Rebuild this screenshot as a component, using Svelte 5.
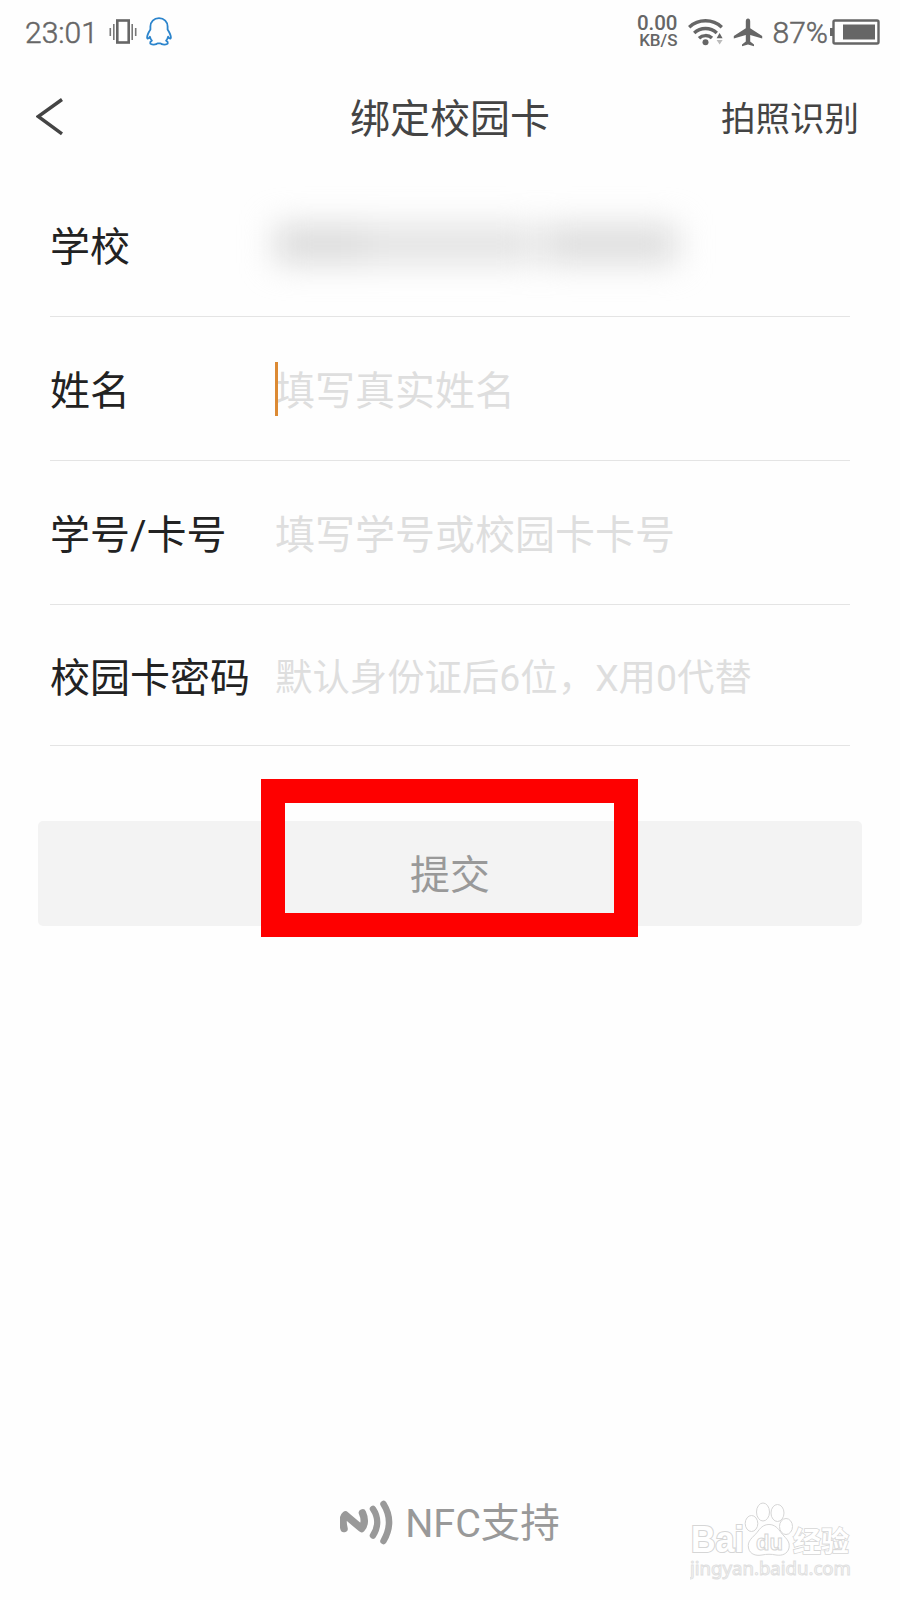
<script lang="ts">
	const fields = [
		{ label: '学校', placeholder: '', blurred: true },
		{ label: '姓名', placeholder: '填写真实姓名', focused: true },
		{ label: '学号/卡号', placeholder: '填写学号或校园卡卡号' },
		{ label: '校园卡密码', placeholder: '默认身份证后6位，X用0代替', password: true }
	];
</script>

<div class="screen">
	<!-- Status bar -->
	<div class="status-bar">
		<span class="clock">23:01</span>
		<svg class="vibrate" width="28" height="28" viewBox="0 0 28 28">
			<rect x="8.3" y="2.5" width="11.4" height="22" fill="none" stroke="#666" stroke-width="2.6" />
			<path d="M4.8 6v16M1.3 10v8M23.2 6v16M26.7 10v8" stroke="#777" stroke-width="1.6" />
		</svg>
		<svg class="qq" width="26" height="30" viewBox="0 0 26 30">
			<path
				d="M13 1.2C7.8 1.2 4.4 4.8 4.4 9.5v3.1C2.8 15.1 1 18 1.1 20.8c.1 1.5 1.7.8 2.8-1.1.4 1.6 1 2.9 2 4-1.2.5-1.9 1.3-1.7 2.5.3 1.7 6.3 1.8 7.4.1h2.8c1.1 1.7 7.1 1.6 7.4-.1.2-1.2-.5-2-1.7-2.5 1-1.1 1.6-2.4 2-4 1.1 1.9 2.7 2.6 2.8 1.1.1-2.8-1.7-5.7-3.3-8.2V9.5C21.6 4.8 18.2 1.2 13 1.2z"
				fill="none"
				stroke="#2b84cc"
				stroke-width="1.8"
				stroke-linejoin="round"
			/>
		</svg>

		<div class="net-speed">
			<span>0.00</span>
			<span class="unit">KB/S</span>
		</div>
		<svg class="wifi" width="36" height="28" viewBox="0 0 36 28">
			<g fill="none" stroke="#666" stroke-width="3.4">
				<path d="M1.2 9.2a24 24 0 0 1 32.6 0" />
				<path d="M6.2 15a16.5 16.5 0 0 1 22.6 0" />
				<path d="M11 20.3a9.5 9.5 0 0 1 13-.3" />
			</g>
			<circle cx="17.5" cy="24.3" r="3" fill="#666" />
			<path d="M28.6 20.2h6L31.6 15z" fill="#666" />
			<path d="M28.6 22h6l-3 4.500z" fill="#bbb" />
		</svg>
		<svg class="plane" width="30" height="29" viewBox="0 0 30 29">
			<path
				d="M15 .5c-1.5 0-2.2 1.3-2.2 2.800v7L.8 18v2.500l12-3.600v6.700L9 26.400v1.900l6-1.700 6 1.700v-1.900l-3.800-2.800v-6.700l12 3.600V18l-12-7.700v-7C17.200 1.800 16.500.5 15 .5z"
				fill="#666"
			/>
		</svg>
		<span class="percent">87%</span>
		<svg class="battery" width="50" height="26" viewBox="0 0 50 26">
			<rect x="3.5" y="1.5" width="45" height="23" rx="1.5" fill="none" stroke="#666" stroke-width="2.4" />
			<path d="M0 9h3v8H0z" fill="#666" />
			<path d="M13 5.5h32v15H13z" fill="#666" />
		</svg>
	</div>

	<!-- Title bar -->
	<header class="nav">
		<button class="back" aria-label="返回">
			<svg width="28" height="40" viewBox="0 0 28 40">
				<path d="M26 2.5L2.2 19.5 26 36.8" fill="none" stroke="#444" stroke-width="3.4" />
			</svg>
		</button>
		<h1>绑定校园卡</h1>
		<button class="scan">拍照识别</button>
	</header>

	<!-- Form -->
	<form class="form">
		{#each fields as field}
			<div class="row">
				<span class="label">{field.label}</span>
				<div class="value" class:password={field.password}>
					{#if field.blurred}
						<div class="blurred">
							<i class="smudge first"></i>
							<i class="smudge middle"></i>
							<i class="smudge last"></i>
						</div>
					{/if}
					{#if field.focused}
						<span class="caret"></span>
					{/if}
					<span class="placeholder">{field.placeholder}</span>
				</div>
			</div>
		{/each}
	</form>

	<div class="submit-area">
		<button class="submit">提交</button>
		<div class="highlight"></div>
	</div>

	<!-- Footer -->
	<footer class="nfc">
		<svg width="54" height="46" viewBox="0 0 54 46">
			<g fill="none" stroke="#999" stroke-linecap="round" stroke-linejoin="round">
				<path d="M4 28.5C2.5 22 3 17 5.5 15L21.5 28.5C25 25 25 18.5 22.5 13" stroke-width="7.5" />
				<path d="M33 9c5.5 8 5.5 18 0 26.5" stroke-width="6.5" />
				<path d="M43.5 4c7.5 12 7.5 24 0 37" stroke-width="6.5" />
			</g>
		</svg>
		<span>NFC支持</span>
	</footer>

	<svg class="watermark" width="170" height="84" viewBox="0 0 170 84">
		<g fill="#fff" stroke="#d6d6d6" stroke-width="1">
			<text class="brand" x="1" y="51" textLength="53" lengthAdjust="spacingAndGlyphs">Bai</text>
			<ellipse cx="61.5" cy="22.5" rx="6.3" ry="8" />
			<ellipse cx="73" cy="11" rx="6.5" ry="9" />
			<ellipse cx="87.5" cy="12" rx="6.5" ry="8.5" />
			<ellipse cx="96" cy="25.5" rx="6.5" ry="8" />
			<path d="M79 23.5c-6 0-9 4-12 8-4 5-10 8-8.5 15.5C60 54 67 55 72 54c5-1 9-1 14 0 6 1 11.5-1 13-7 1.5-7.5-4.5-10.5-8-15.5-3-4-6-8-12-8z" />
			<text class="du" x="66" y="49">du</text>
			<text class="cn" x="103" y="51">经验</text>
			<text class="url" x="0" y="74" textLength="161" lengthAdjust="spacingAndGlyphs">jingyan.baidu.com</text>
		</g>
	</svg>
</div>

<style>
	:global(body) {
		margin: 0;
		background: #fefefe;
	}

	.screen {
		position: relative;
		display: flex;
		flex-direction: column;
		width: 900px;
		height: 1600px;
		overflow: hidden;
		background: #fefefe;
		font-family: Roboto, 'Noto Sans CJK SC', sans-serif;
	}

	button {
		padding: 0;
		border: none;
		background: none;
		font-family: inherit;
	}

	svg {
		display: block;
		flex-shrink: 0;
	}

	/* Status bar */
	.status-bar {
		display: flex;
		align-items: center;
		height: 64px;
		padding: 0 20px 0 25px;
		color: #666;
	}

	.clock,
	.percent {
		padding-top: 2px;
		font-size: 30px;
		font-weight: 300;
		line-height: 60px;
		-webkit-text-stroke: 0.5px #666;
	}

	.clock {
		width: 84px;
	}

	.qq {
		margin-left: 9px;
	}

	.net-speed {
		display: flex;
		flex-direction: column;
		align-items: flex-end;
		margin-left: auto;
		font-size: 20.5px;
		font-weight: 500;
		line-height: 17px;
	}

	.net-speed .unit {
		font-size: 17px;
	}

	.wifi {
		margin-left: 10px;
	}

	.plane {
		margin-left: 9px;
	}

	.percent {
		margin-left: 10px;
		margin-right: 2px;
	}

	/* Title bar */
	.nav {
		display: flex;
		align-items: center;
		justify-content: space-between;
		height: 104px;
		padding: 0 41px 2px 36px;
		color: #444;
	}

	.back {
		width: 143px;
		padding-top: 2px;
	}

	h1 {
		margin: 0;
		font-size: 40px;
		font-weight: 400;
	}

	.scan {
		font-size: 34.5px;
		color: #444;
	}

	/* Form */
	.form {
		padding: 4px 50px 0;
	}

	.row {
		display: flex;
		align-items: center;
		box-sizing: border-box;
		height: 144px;
		padding-bottom: 2px;
		border-bottom: 1px solid #e4e4e4;
	}

	.row:first-child {
		height: 143px;
	}

	.row:last-child {
		height: 141px;
		padding-bottom: 0;
	}

	.label {
		width: 225px;
		font-size: 40px;
		color: #222;
		white-space: nowrap;
	}

	.value {
		position: relative;
		font-size: 40px;
		color: #dedede;
		white-space: nowrap;
	}

	.value.password {
		font-size: 37.4px;
	}

	.caret {
		position: absolute;
		left: 0;
		top: calc(50% + 1px);
		width: 3px;
		height: 54px;
		background: #dc8a34;
		transform: translateY(-50%);
	}

	.blurred {
		display: flex;
		width: 402px;
		filter: blur(16px);
	}

	.smudge {
		height: 38px;
		background: #e2e2e2;
	}

	.smudge.first {
		width: 90px;
		background: #dadada;
	}

	.smudge.middle {
		width: 170px;
	}

	.smudge.last {
		width: 134px;
		margin-left: 8px;
		background: #dcdcdc;
	}

	/* Submit */
	.submit-area {
		position: relative;
		padding: 75px 38px 0;
	}

	.submit {
		display: block;
		width: 100%;
		height: 105px;
		padding-bottom: 3px;
		border-radius: 5px;
		background: #f3f3f3;
		font-size: 40px;
		color: #999;
	}

	.highlight {
		position: absolute;
		top: 33px;
		left: 261px;
		box-sizing: border-box;
		width: 377px;
		height: 158px;
		border: 24px solid #fe0000;
	}

	/* Footer */
	.nfc {
		display: flex;
		align-items: center;
		justify-content: center;
		gap: 11px;
		margin-top: auto;
		margin-bottom: 46px;
		font-size: 39.5px;
		line-height: 60px;
		color: #999;
	}

	.nfc span {
		padding-top: 3px;
	}

	.watermark {
		position: absolute;
		left: 690px;
		top: 1501px;
	}

	.brand,
	.du {
		font-family: 'Liberation Sans', sans-serif;
		font-weight: 700;
	}

	.brand {
		font-size: 37px;
		stroke-width: 2.2;
		paint-order: stroke;
	}

	.du {
		font-size: 22px;
	}

	.cn {
		font-family: 'Noto Sans CJK SC', sans-serif;
		font-weight: 700;
		font-size: 28px;
		stroke-width: 1.6;
		paint-order: stroke;
	}

	.url {
		font-family: 'Noto Sans', sans-serif;
		font-size: 18px;
		stroke: #e0e0e0;
		stroke-width: 1;
	}
</style>
